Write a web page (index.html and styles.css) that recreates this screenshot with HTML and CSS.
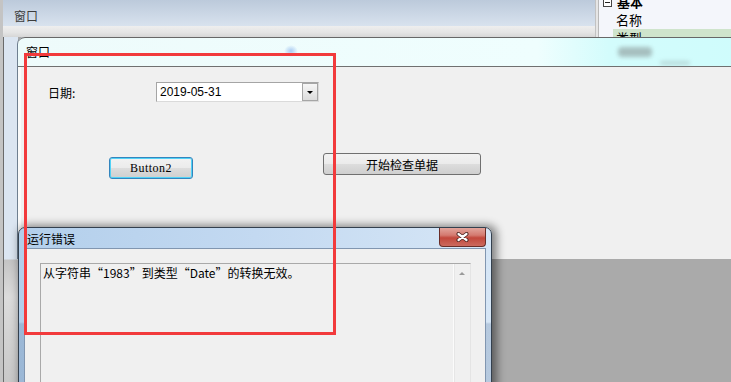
FILE: index.html
```html
<!DOCTYPE html>
<html lang="zh-CN">
<head>
    <meta charset="UTF-8">
    <title>窗口</title>
    <link rel="stylesheet" href="styles.css">
</head>
<body>
    <div class="screen">
        <div class="host">
            <div class="host-top">
                <div class="host-head">
                    <div class="host-title">窗口</div>
                    <div class="host-band"></div>
                </div>
                <div class="props">
                    <div class="prop-group"><span class="toggle"></span><b>基本</b></div>
                    <div class="prop-item">名称</div>
                    <div class="prop-item sel">类型</div>
                </div>
            </div>
            <div class="host-body">
                <div class="host-strip"></div>
                <div class="mdi"></div>
            </div>
        </div>

        <div class="form-win">
            <div class="form-title">
                <span>窗口</span>
                <span class="ghost-dot"></span>
                <span class="ghost-blob"></span>
                <span class="ghost-blob small"></span>
            </div>
            <div class="form-body">
                <div class="row">
                    <label class="field-label">日期:</label>
                    <div class="datepicker">
                        <span class="date-value">2019-05-31</span>
                        <span class="drop"></span>
                    </div>
                </div>
                <div class="row buttons">
                    <button type="button" class="btn btn-focus">Button2</button>
                    <button type="button" class="btn btn-check">开始检查单据</button>
                </div>
            </div>
        </div>

        <div class="dialog">
            <div class="dialog-title">
                <span>运行错误</span>
                <button type="button" class="close">
                    <svg width="13" height="10" viewBox="0 0 13 10">
                        <path d="M2.5 2 L10.5 8 M10.5 2 L2.5 8" stroke="#4a2420" stroke-width="4" stroke-linecap="round"/>
                        <path d="M2.5 2 L10.5 8 M10.5 2 L2.5 8" stroke="#ffffff" stroke-width="2.2" stroke-linecap="round"/>
                    </svg>
                </button>
            </div>
            <div class="dialog-client">
                <div class="msgbox">
                    <div class="msg">从字符串“1983”到类型“Date”的转换无效。</div>
                    <div class="vscroll"><span class="up"></span></div>
                </div>
            </div>
        </div>

        <div class="mark"></div>
    </div>
</body>
</html>
```

FILE: styles.css
```css
body {
    margin: 0;
    font-family: "Noto Sans CJK SC", "Liberation Sans", sans-serif;
    font-size: 12px;
    color: #000;
}
.screen {
    position: relative;
    width: 731px;
    height: 382px;
    overflow: hidden;
    background: #aaaaaa;
}

/* parent window */
.host {
    display: flex;
    flex-direction: column;
    height: 100%;
    border-left: 3px solid #c4c4c4;
    box-sizing: border-box;
}
.host-top {
    display: flex;
    height: 37px;
}
.host-head {
    flex: 1;
    display: flex;
    flex-direction: column;
    box-shadow: inset 1px 0 #6a6a6a;
}
.host-title {
    height: 26px;
    box-sizing: border-box;
    padding: 6px 0 0 11px;
    line-height: 20px;
    color: #3c3c3c;
    background: linear-gradient(#bccadb, #d8e2ee);
}
.host-band {
    flex: 1;
    background: linear-gradient(#eeeeee, #e4e4e4 60%, #d6d6d6);
}
.props {
    width: 132px;
    background: #f4f6fb;
    border-left: 1px solid #c2c2c2;
    box-shadow: inset 2px 0 #e6e6e6, inset 3px 0 #b9b9b9;
    margin-top: -7px;
    padding-left: 3px;
    overflow: hidden;
}
.prop-group, .prop-item {
    height: 18px;
    line-height: 18px;
    display: flex;
    align-items: center;
}
.prop-group {
    padding-left: 4px;
    font-size: 13px;
}
.toggle {
    width: 7px;
    height: 7px;
    border: 1px solid #444;
    margin-right: 5px;
    position: relative;
    background: #fff;
}
.toggle::after {
    content: "";
    position: absolute;
    left: 1px;
    top: 3px;
    width: 5px;
    height: 1px;
    background: #222;
}
.prop-item {
    margin-left: 14px;
    padding-left: 3px;
    font-size: 13px;
}
.prop-item.sel {
    background: #cfe4cc;
}

.host-body {
    flex: 1;
    display: flex;
}
.host-strip {
    width: 15px;
    box-shadow: inset 1px 0 #6a6a6a;
    background: linear-gradient(#dbe5f1 0, #dbe5f1 222px, #c4c4c4 223px, #dcdcdc 260px, #c8c8c8);
}
.mdi {
    flex: 1;
    background: #aaaaaa;
}

/* child form */
.form-win {
    position: absolute;
    left: 17px;
    top: 37px;
    right: -8px;
    height: 222px;
    display: flex;
    flex-direction: column;
    border-left: 1px solid #6f7f90;
    border-radius: 7px 0 0 0;
    background: #f0f0f0;
    box-shadow: inset 3px 0 #fafafa;
}
.form-title {
    position: relative;
    height: 28px;
    line-height: 28px;
    padding-left: 8px;
    border-top: 1px solid #676767;
    border-bottom: 1px solid #707070;
    border-top-left-radius: 7px;
    background: linear-gradient(to right, #eefbfb 0, #effefe 72%, #d3fcfc 82%, #cffcfc 100%);
}
.ghost-dot {
    position: absolute;
    left: 266px;
    top: 7px;
    width: 14px;
    height: 12px;
    border-radius: 50%;
    background: radial-gradient(#a9caf2, rgba(200, 225, 250, 0) 70%);
}
.ghost-blob {
    position: absolute;
    left: 600px;
    top: 9px;
    width: 34px;
    height: 10px;
    border-radius: 4px;
    background: #8a9898;
    opacity: 0.6;
    filter: blur(2px);
}
.ghost-blob.small {
    left: 642px;
    top: 23px;
    width: 30px;
    height: 4px;
    opacity: 0.35;
}
.form-body {
    flex: 1;
    padding: 15px 0 0 30px;
}
.row {
    display: flex;
    align-items: center;
}
.field-label {
    width: 108px;
}
.datepicker {
    width: 163px;
    height: 20px;
    box-sizing: border-box;
    display: flex;
    align-items: center;
    border: 1px solid #a5a5a5;
    border-right-color: #dadada;
    border-bottom-color: #dadada;
    background: #fff;
}
.date-value {
    padding-left: 3px;
    font-family: "Liberation Sans", sans-serif;
    font-size: 12px;
}
.drop {
    margin-left: auto;
    width: 16px;
    height: 18px;
    box-sizing: border-box;
    border: 1px solid #a6a6a6;
    background: linear-gradient(#f6f6f6, #dcdcdc);
    position: relative;
}
.drop::after {
    content: "";
    position: absolute;
    left: 4px;
    top: 7px;
    border-left: 3px solid transparent;
    border-right: 3px solid transparent;
    border-top: 3px solid #000;
}
.buttons {
    align-items: flex-start;
    margin-top: 51px;
}
.btn {
    box-sizing: border-box;
    height: 22px;
    padding: 0;
    border: 1px solid #707070;
    border-radius: 3px;
    background: linear-gradient(#f2f2f2 0, #ebebeb 50%, #dddddd 50%, #cfcfcf 100%);
    font-family: "Noto Sans CJK SC", sans-serif;
    font-size: 12px;
    color: #000;
}
.btn-focus {
    width: 84px;
    margin: 4px 0 0 61px;
    border-color: #3385be;
    box-shadow: inset 0 0 0 1px #52d2f6;
    font-family: "Liberation Serif", serif;
    font-size: 12px;
    letter-spacing: 0.5px;
}
.btn-check {
    width: 158px;
    margin-left: 130px;
}

/* error dialog */
.dialog {
    position: absolute;
    left: 18px;
    top: 227px;
    width: 474px;
    height: 170px;
    box-sizing: border-box;
    display: flex;
    flex-direction: column;
    padding: 0 5px;
    border: 1px solid #34404e;
    border-radius: 7px 7px 0 0;
    background:
        linear-gradient(transparent 0, transparent 94px, rgba(70, 100, 140, 0.22) 96px),
        linear-gradient(to right, #b3cfeb, #c3d9f1 50%, #d6e6f6);
    box-shadow: 3px 0 9px 2px rgba(0, 0, 0, 0.45);
}
.dialog-title {
    position: relative;
    height: 29px;
    display: flex;
    align-items: center;
    padding-left: 3px;
}
.close {
    position: absolute;
    right: 0;
    top: 0;
    width: 47px;
    height: 19px;
    padding: 0;
    display: flex;
    align-items: center;
    justify-content: center;
    border: 1px solid #6a2d27;
    border-top: none;
    border-radius: 0 0 4px 4px;
    background: linear-gradient(#e2a59c 0, #d47a70 40%, #c2483c 55%, #cc6a5e 100%);
}
.dialog-client {
    flex: 1;
    border: 1px solid #8196b0;
    background: #f0f0f0;
    padding: 14px 14px 0 15px;
}
.msgbox {
    display: flex;
    height: 130px;
    border: 1px solid #a9a9a9;
    border-right-color: #e4e4e4;
    border-bottom-color: #e4e4e4;
    background: #f0f0f0;
}
.msg {
    flex: 1;
    padding: 1px 2px;
    line-height: 16px;
}
.vscroll {
    width: 16px;
    border-left: 1px solid #fbfbfb;
    box-shadow: inset 1px 0 #e6e6e6;
    position: relative;
}
.up {
    position: absolute;
    left: 5px;
    top: 8px;
    border-left: 3px solid transparent;
    border-right: 3px solid transparent;
    border-bottom: 3px solid #9a9a9a;
}

/* red annotation */
.mark {
    position: absolute;
    left: 24px;
    top: 53px;
    width: 312px;
    height: 282px;
    box-sizing: border-box;
    border: 3px solid #f23a3c;
}
```
